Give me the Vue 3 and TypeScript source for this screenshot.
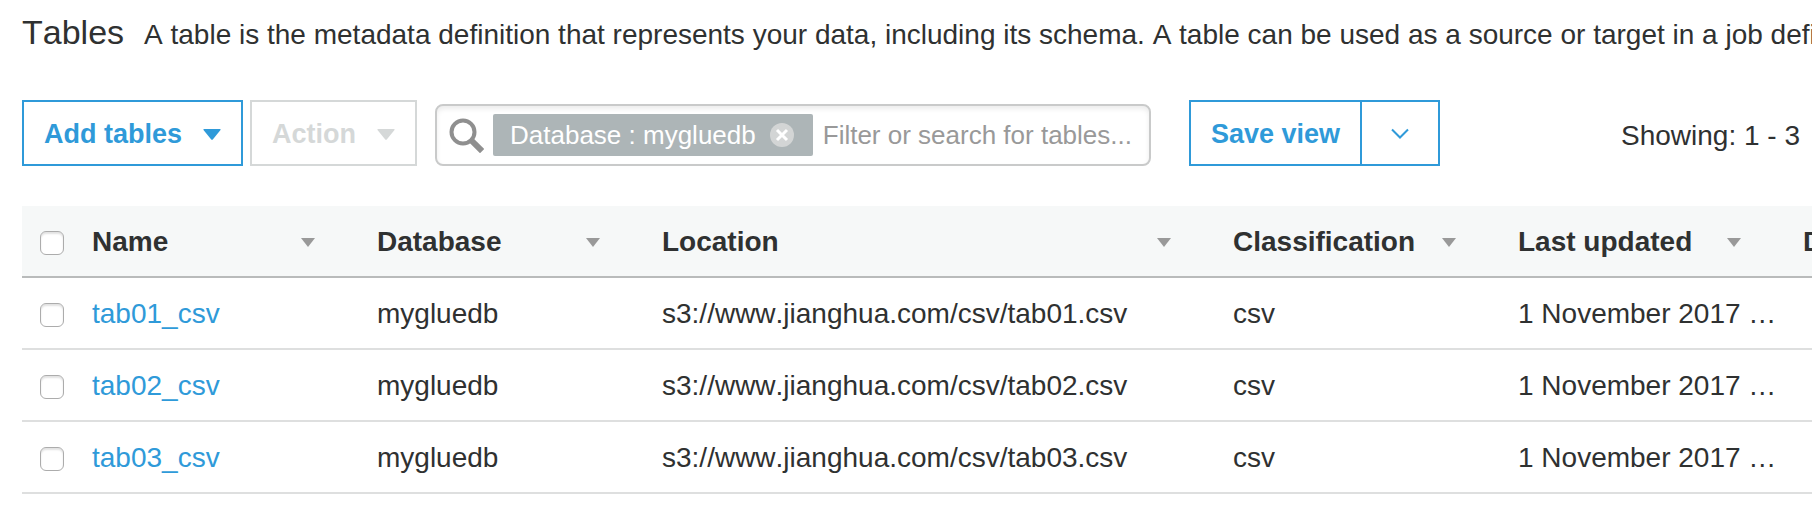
<script setup lang="ts">
import { ref } from 'vue'

interface Column {
  key: string
  label: string
  sortable: boolean
}

interface TableRow {
  name: string
  database: string
  location: string
  classification: string
  updated: string
}

const columns: Column[] = [
  { key: 'name', label: 'Name', sortable: true },
  { key: 'database', label: 'Database', sortable: true },
  { key: 'location', label: 'Location', sortable: true },
  { key: 'classification', label: 'Classification', sortable: true },
  { key: 'updated', label: 'Last updated', sortable: true },
  { key: 'deprecated', label: 'Deprecated', sortable: false },
]

const rows: TableRow[] = ['tab01', 'tab02', 'tab03'].map((id) => ({
  name: `${id}_csv`,
  database: 'mygluedb',
  location: `s3://www.jianghua.com/csv/${id}.csv`,
  classification: 'csv',
  updated: '1 November 2017 …',
}))

const selected = ref<string[]>([])
const query = ref('')
const databaseFilter = ref<string | null>('mygluedb')

function toggleAll(event: Event) {
  const checked = (event.target as HTMLInputElement).checked
  selected.value = checked ? rows.map((row) => row.name) : []
}
</script>

<template>
  <main class="page">
    <header class="heading">
      <h1>Tables</h1>
      <p>A table is the metadata definition that represents your data, including its schema. A table can be used as a source or target in a job definition.</p>
    </header>

    <div class="toolbar">
      <button type="button" class="btn">
        Add tables
        <svg class="arrow" viewBox="0 0 18 11" aria-hidden="true"><path d="M1 0h16q1 0 .5 1L10 10.2q-1 1-2 0L.5 1Q0 0 1 0z" /></svg>
      </button>
      <button type="button" class="btn btn-muted" disabled>
        Action
        <svg class="arrow" viewBox="0 0 18 11" aria-hidden="true"><path d="M1 0h16q1 0 .5 1L10 10.2q-1 1-2 0L.5 1Q0 0 1 0z" /></svg>
      </button>

      <div class="search">
        <svg class="magnifier" viewBox="0 0 36 36" aria-hidden="true">
          <circle cx="15" cy="15" r="11.5" fill="none" stroke="#8f8f8f" stroke-width="4" />
          <path d="M24 24l8 8" stroke="#8f8f8f" stroke-width="6" stroke-linecap="square" stroke-linejoin="round" />
        </svg>
        <span v-if="databaseFilter" class="chip">
          Database : {{ databaseFilter }}
          <button type="button" class="chip-remove" aria-label="Remove filter" @click="databaseFilter = null">
            <svg viewBox="0 0 24 24" aria-hidden="true">
              <circle cx="12" cy="12" r="12" fill="#d3d5d5" />
              <path d="M7 7l10 10M17 7L7 17" stroke="#fff" stroke-width="3" />
            </svg>
          </button>
        </span>
        <input v-model="query" type="text" aria-label="Filter tables" placeholder="Filter or search for tables..." />
      </div>

      <div class="split">
        <button type="button" class="btn">Save view</button>
        <button type="button" class="btn btn-toggle" aria-label="More view options">
          <svg viewBox="0 0 18 12" aria-hidden="true"><path d="M1 1.5l8 8 8-8" fill="none" stroke="currentColor" stroke-width="2" /></svg>
        </button>
      </div>

      <span class="count">Showing: 1 - 3</span>
    </div>

    <div class="grid">
      <table>
        <colgroup>
          <col class="col-check" />
          <col v-for="column in columns" :key="column.key" :class="column.key === 'location' ? 'col-wide' : 'col-text'" />
        </colgroup>
        <thead>
          <tr>
            <th class="check" scope="col">
              <input type="checkbox" aria-label="Select all tables" :checked="selected.length === rows.length" @change="toggleAll" />
            </th>
            <th v-for="column in columns" :key="column.key" scope="col">
              <div class="th-inner">
                {{ column.label }}
                <svg v-if="column.sortable" class="sort" viewBox="0 0 14 9" aria-hidden="true"><path d="M0 0h14L7 9z" /></svg>
              </div>
            </th>
          </tr>
        </thead>
        <tbody>
          <tr v-for="row in rows" :key="row.name">
            <td class="check">
              <input v-model="selected" type="checkbox" :value="row.name" :aria-label="`Select ${row.name}`" />
            </td>
            <td><a href="#">{{ row.name }}</a></td>
            <td>{{ row.database }}</td>
            <td>{{ row.location }}</td>
            <td>{{ row.classification }}</td>
            <td>{{ row.updated }}</td>
            <td></td>
          </tr>
        </tbody>
      </table>
    </div>
  </main>
</template>

<style>
body {
  margin: 0;
  background: #fff;
}
</style>

<style scoped>
.page {
  box-sizing: border-box;
  padding: 10px 0 24px 22px;
  overflow: hidden;
  color: #2f3131;
  font: 28px/36px "Liberation Sans", Arial, sans-serif;
  font-kerning: none;
}

.heading {
  display: flex;
  align-items: baseline;
  gap: 20px;
  white-space: nowrap;
}

.heading h1 {
  margin: 0;
  font-size: 34px;
  line-height: 44px;
  font-weight: 400;
}

.heading p {
  margin: 0;
}

.toolbar {
  display: flex;
  align-items: stretch;
  height: 66px;
  margin: 46px 12px 40px 0;
  white-space: nowrap;
}

.btn {
  display: flex;
  align-items: center;
  justify-content: space-between;
  gap: 21px;
  box-sizing: border-box;
  margin: 0 7px 0 0;
  padding: 2px 20px 0;
  border: 2px solid #2f9ad9;
  background: #fff;
  color: #2f9ad9;
  font: bold 27px/36px "Liberation Sans", Arial, sans-serif;
  font-kerning: none;
}

.btn-muted {
  border-color: #d5d8d8;
  color: #d5d8d8;
}

.arrow {
  width: 18px;
  height: 11px;
  fill: currentColor;
}

.search {
  display: flex;
  align-items: center;
  box-sizing: border-box;
  width: 716px;
  margin: 4px 38px 0 11px;
  padding: 0 8px 0 11px;
  border: 2px solid #c9caca;
  border-radius: 8px;
  box-shadow: inset 0 3px 5px #ececec;
  font-size: 26px;
}

.magnifier {
  flex: none;
  width: 36px;
  height: 36px;
  margin-right: 9px;
}

.chip {
  display: flex;
  flex: none;
  align-items: center;
  justify-content: space-between;
  gap: 14px;
  height: 42px;
  padding: 0 19px 0 17px;
  border-radius: 2px;
  background: #adb5b7;
  color: #fff;
}

.chip-remove {
  width: 24px;
  height: 24px;
  padding: 0;
  border: 0;
  background: none;
}

.chip-remove svg {
  display: block;
  width: 24px;
  height: 24px;
}

.search input {
  flex: 1;
  min-width: 0;
  margin: 0;
  padding: 0 0 0 10px;
  border: 0;
  outline: 0;
  background: none;
  color: inherit;
  font: inherit;
}

.search input::placeholder {
  color: #999;
  opacity: 1;
}

.split {
  display: flex;
}

.split .btn {
  margin: 0;
}

.split .btn-toggle {
  justify-content: center;
  width: 80px;
  margin-left: -2px;
}

.btn-toggle svg {
  width: 18px;
  height: 12px;
}

.count {
  margin-left: auto;
  padding-top: 4px;
  line-height: 64px;
}

.grid {
  overflow: hidden;
}

table {
  width: 100%;
  min-width: 2052px;
  border-collapse: separate;
  border-spacing: 0;
  table-layout: fixed;
}

.col-check {
  width: 56px;
}

.col-text {
  width: 285px;
}

.col-wide {
  width: 571px;
}

th,
td {
  box-sizing: border-box;
  height: 72px;
  padding: 2px 0 0 14px;
  border-bottom: 2px solid #dedfdf;
  text-align: left;
  white-space: nowrap;
}

th {
  border-bottom-color: #b9bbbb;
  background: #f6f8f8;
}

th.check,
td.check {
  padding: 4px 0 0 18px;
}

.th-inner {
  display: flex;
  align-items: center;
  justify-content: space-between;
  padding: 0 48px 0 0;
}

.sort {
  width: 14px;
  height: 9px;
  fill: #999;
}

a {
  color: #2f9ad9;
  text-decoration: none;
}

input[type="checkbox"] {
  display: block;
  box-sizing: border-box;
  width: 24px;
  height: 24px;
  margin: 0;
  appearance: none;
  border: 1px solid #acacac;
  border-radius: 6px;
  background: #fff;
  box-shadow: inset 0 2px 2px #e2e2e2;
}

input[type="checkbox"]:checked {
  background: #2f9ad9;
}
</style>
